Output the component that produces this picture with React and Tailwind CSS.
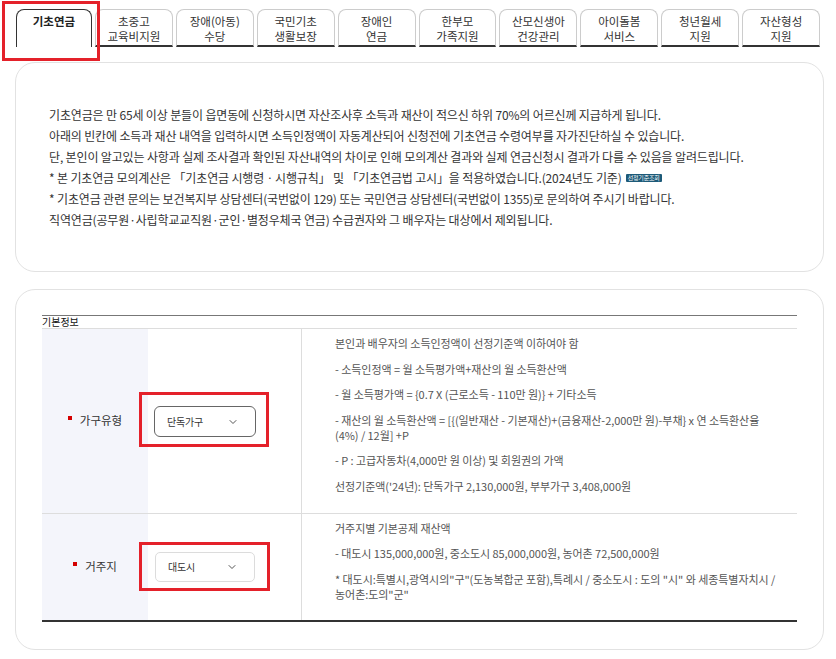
import { ChevronDown } from 'lucide-react';

const FONT = { fontFamily: '"Noto Sans CJK KR", "Noto Sans", sans-serif' };

const TABS = [
  ['초중고', '교육비지원'],
  ['장애(아동)', '수당'],
  ['국민기초', '생활보장'],
  ['장애인', '연금'],
  ['한부모', '가족지원'],
  ['산모신생아', '건강관리'],
  ['아이돌봄', '서비스'],
  ['청년월세', '지원'],
  ['자산형성', '지원'],
];

const INTRO = [
  '기초연금은 만 65세 이상 분들이 읍면동에 신청하시면 자산조사후 소득과 재산이 적으신 하위 70%의 어르신께 지급하게 됩니다.',
  '아래의 빈칸에 소득과 재산 내역을 입력하시면 소득인정액이 자동계산되어 신청전에 기초연금 수령여부를 자가진단하실 수 있습니다.',
  '단, 본인이 알고있는 사항과 실제 조사결과 확인된 자산내역의 차이로 인해 모의계산 결과와 실제 연금신청시 결과가 다를 수 있음을 알려드립니다.',
];

// red highlight box drawn over an element
function Mark({ className }) {
  return <span className={'pointer-events-none absolute border-[3px] border-[#e4212a] ' + className} />;
}

function Select({ value, dark, markClass }) {
  return (
    <div className="relative">
      <div
        className={
          'flex items-center justify-between bg-white pl-[12px] pr-[16px] text-[10px] tracking-[-0.2px] text-[#333] ' +
          (dark ? 'h-[31px] w-[102px] rounded-[6px] border border-[#666]' : 'h-[30px] w-[100px] rounded-[5px] border border-[#dcdcdc]')
        }
      >
        <span>{value}</span>
        <ChevronDown size={12} strokeWidth={2} className="text-[#555]" />
      </div>
      <Mark className={markClass} />
    </div>
  );
}

function Label({ children }) {
  return (
    <div className="flex items-center justify-center text-[11.5px] text-[#333]">
      <span className="mr-[8px] mb-[6px] h-[4px] w-[4px] bg-[#d40000]" />
      {children}
    </div>
  );
}

export default function App() {
  return (
    <div className="min-h-[659px] bg-white pb-[12px]" style={FONT}>
      {/* Tabs */}
      <div className="flex gap-[3px] pl-[16px] pr-[16px] pt-[9px]">
        <div className="relative flex-1">
          <div className="flex h-[38px] justify-center rounded-t-[8px] border border-b-0 border-[#333] pt-[4px] text-[11.5px] font-bold leading-[15px] text-[#222]">
            기초연금
          </div>
          <Mark className="-left-[14px] -right-[8px] -top-[8px] -bottom-[14px]" />
        </div>
        {TABS.map(([a, b]) => (
          <div
            key={a}
            className="flex h-[38px] flex-1 flex-col items-center rounded-t-[8px] border border-b-2 border-[#ccc] border-b-[#333] pt-[4px] text-[11.5px] leading-[15px] text-[#333]"
          >
            <span>{a}</span>
            <span>{b}</span>
          </div>
        ))}
      </div>

      {/* Intro card */}
      <div className="ml-[15px] mr-[12px] mt-[15px] rounded-[20px] border border-[#e2e2e2] px-[33px] py-[41px] text-[12px] leading-[21px] tracking-[-0.15px] text-[#333]">
        {INTRO.map((t) => (
          <p key={t}>{t}</p>
        ))}
        <p className="flex items-center">
          <span>* 본 기초연금 모의계산은 「기초연금 시행령ㆍ시행규칙」 및 「기초연금법 고시」을 적용하였습니다.(2024년도 기준)</span>
          <span className="ml-[4px] inline-flex h-[8px] items-center rounded-[1px] bg-[#1d5a78] px-[2px] text-[6px] leading-[8px] tracking-[-0.2px] text-white">
            선정기준조회
          </span>
        </p>
        <p>* 기초연금 관련 문의는 보건복지부 상담센터(국번없이 129) 또는 국민연금 상담센터(국번없이 1355)로 문의하여 주시기 바랍니다.</p>
        <p>직역연금(공무원·사립학교교직원·군인·별정우체국 연금) 수급권자와 그 배우자는 대상에서 제외됩니다.</p>
      </div>

      {/* Form card */}
      <div className="ml-[15px] mr-[12px] mt-[17px] rounded-[20px] border border-[#e2e2e2] px-[26px] pb-[27px] pt-[25px]">
        <div className="border-t border-[#777]">
          <div className="text-[10px] leading-[12px] text-[#111]">기본정보</div>
          {/* row 1 */}
          <div className="grid grid-cols-[106px_153px_1fr] border-t border-[#ddd]">
            <div className="flex items-center justify-center bg-[#f4f5fb]">
              <Label>가구유형</Label>
            </div>
            <div className="flex items-center pl-[6px] pt-[2px]">
              <Select value="단독가구" dark markClass="-left-[15px] -right-[13px] -top-[14px] -bottom-[10px]" />
            </div>
            <div className="flex flex-col gap-[10.5px] border-l border-[#ddd] pb-[19px] pl-[33px] pr-[4px] pt-[7px] text-[11px] leading-[15px] tracking-[-0.05px] text-[#555]">
              <p>본인과 배우자의 소득인정액이 선정기준액 이하여야 함</p>
              <p>- 소득인정액 = 월 소득평가액+재산의 월 소득환산액</p>
              <p>- 월 소득평가액 = {'{'}0.7 X (근로소득 - 110만 원){'}'} + 기타소득</p>
              <p>
                - 재산의 월 소득환산액 = [{'{'}(일반재산 - 기본재산)+(금융재산-2,000만 원)-부채{'}'} x 연 소득환산율
                <br />
                (4%) / 12월] +P
              </p>
              <p>- P : 고급자동차(4,000만 원 이상) 및 회원권의 가액</p>
              <p>선정기준액('24년): 단독가구 2,130,000원, 부부가구 3,408,000원</p>
            </div>
          </div>
          {/* row 2 */}
          <div className="grid grid-cols-[106px_153px_1fr] border-b-2 border-t border-[#ddd] border-b-[#333]">
            <div className="flex items-center justify-center bg-[#f4f5fb]">
              <Label>거주지</Label>
            </div>
            <div className="flex items-center pl-[7px]">
              <Select value="대도시" markClass="-left-[16px] -right-[15px] -top-[10px] -bottom-[9px]" />
            </div>
            <div className="flex flex-col gap-[10.5px] border-l border-[#ddd] pb-[18px] pl-[33px] pr-[4px] pt-[7px] text-[11px] leading-[15px] tracking-[-0.05px] text-[#555]">
              <p>거주지별 기본공제 재산액</p>
              <p>- 대도시 135,000,000원, 중소도시 85,000,000원, 농어촌 72,500,000원</p>
              <p>
                * 대도시:특별시,광역시의"구"(도농복합군 포함),특례시 / 중소도시 : 도의 "시" 와 세종특별자치시 /
                <br />
                농어촌:도의"군"
              </p>
            </div>
          </div>
        </div>
      </div>
    </div>
  );
}
